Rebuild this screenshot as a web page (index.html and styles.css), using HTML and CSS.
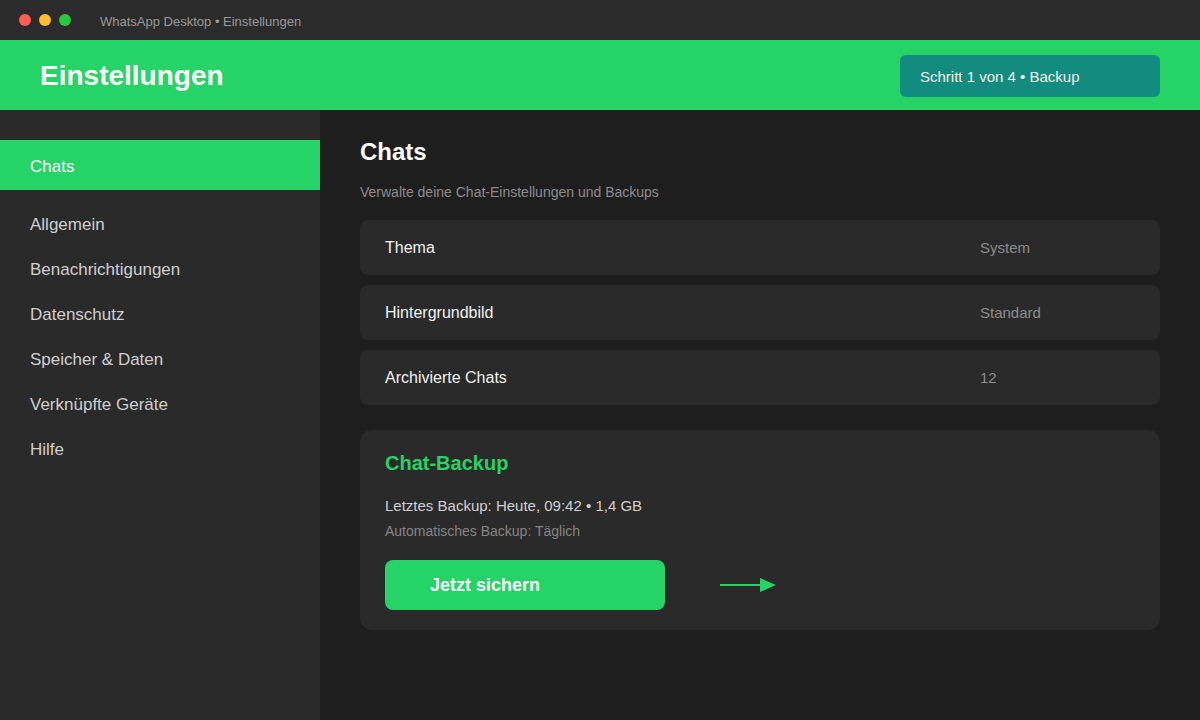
FILE: index.html
```html
<!DOCTYPE html>
<html lang="de">
<head>
  <meta charset="UTF-8">
  <meta name="viewport" content="width=device-width, initial-scale=1.0">
  <title>WhatsApp Desktop • Einstellungen</title>
  <link rel="stylesheet" href="styles.css">
</head>
<body>
  <div class="window">
    <div class="titlebar">
      <div class="lights">
        <span class="light red"></span>
        <span class="light yellow"></span>
        <span class="light green"></span>
      </div>
      <span class="window-title">WhatsApp Desktop • Einstellungen</span>
    </div>

    <header class="header">
      <h1>Einstellungen</h1>
      <div class="step">Schritt 1 von 4 • Backup</div>
    </header>

    <div class="body">
      <nav class="sidebar">
        <a class="nav-item active">Chats</a>
        <div class="nav-list">
          <a class="nav-item">Allgemein</a>
          <a class="nav-item">Benachrichtigungen</a>
          <a class="nav-item">Datenschutz</a>
          <a class="nav-item">Speicher &amp; Daten</a>
          <a class="nav-item">Verknüpfte Geräte</a>
          <a class="nav-item">Hilfe</a>
        </div>
      </nav>

      <main class="content">
        <h2>Chats</h2>
        <p class="subtitle">Verwalte deine Chat-Einstellungen und Backups</p>

        <div class="settings">
          <div class="setting-row">
            <span class="setting-label">Thema</span>
            <span class="setting-value">System</span>
          </div>
          <div class="setting-row">
            <span class="setting-label">Hintergrundbild</span>
            <span class="setting-value">Standard</span>
          </div>
          <div class="setting-row">
            <span class="setting-label">Archivierte Chats</span>
            <span class="setting-value">12</span>
          </div>
        </div>

        <section class="backup">
          <h3>Chat-Backup</h3>
          <p class="backup-last">Letztes Backup: Heute, 09:42 • 1,4 GB</p>
          <p class="backup-auto">Automatisches Backup: Täglich</p>
          <div class="backup-actions">
            <button class="backup-btn">Jetzt sichern</button>
            <svg class="arrow" width="56" height="16" viewBox="0 0 56 16">
              <line x1="0" y1="8" x2="42" y2="8" stroke="#25d366" stroke-width="2"/>
              <polygon points="40,1 56,8 40,15" fill="#25d366"/>
            </svg>
          </div>
        </section>
      </main>
    </div>
  </div>
</body>
</html>
```

FILE: styles.css
```css
body {
    margin: 0;
    font-family: "Liberation Sans", Arial, sans-serif;
    background-color: #1e1e1e;
}

.window {
    width: 1200px;
    height: 720px;
    display: flex;
    flex-direction: column;
    overflow: hidden;
}

/* barra da janela */
.titlebar {
    height: 40px;
    flex-shrink: 0;
    background-color: #2b2b2b;
    display: flex;
    align-items: center;
    padding-left: 19px;
}

.lights {
    display: flex;
    gap: 8px;
}

.light {
    width: 12px;
    height: 12px;
    border-radius: 50%;
}

.light.red { background-color: #ff5f57; }
.light.yellow { background-color: #febc2e; }
.light.green { background-color: #28c840; }

.window-title {
    margin-left: 29px;
    padding-top: 2px;
    font-size: 13px;
    color: #9a9a9a;
}

.header {
    height: 70px;
    flex-shrink: 0;
    box-sizing: border-box;
    padding: 2px 40px 0;
    background-color: #25d366;
    display: flex;
    align-items: center;
    justify-content: space-between;
}

.header h1 {
    margin: 0;
    font-size: 28px;
    font-weight: bold;
    color: #fff;
}

.step {
    width: 260px;
    height: 42px;
    box-sizing: border-box;
    padding-left: 20px;
    display: flex;
    align-items: center;
    background-color: #128c7e;
    border-radius: 6px;
    color: #f2f2f2;
    font-size: 15px;
}

.body {
    flex: 1;
    display: flex;
}

.sidebar {
    width: 320px;
    flex-shrink: 0;
    background-color: #2a2a2a;
    padding-top: 30px;
}

.nav-item {
    display: flex;
    align-items: center;
    height: 45px;
    padding-left: 30px;
    font-size: 17px;
    color: #cfcfcf;
}

.nav-item.active {
    height: 50px;
    box-sizing: border-box;
    padding-top: 3px;
    background-color: #25d366;
    color: #fff;
}

.nav-list {
    padding-top: 12px;
}

.content {
    flex: 1;
    padding: 20px 40px;
}

.content h2 {
    margin: 0;
    font-size: 24px;
    line-height: 44px;
    font-weight: bold;
    color: #fff;
}

.subtitle {
    margin: 8px 0 0;
    font-size: 14px;
    line-height: 20px;
    color: #8c8c8c;
}

.settings {
    margin-top: 18px;
    display: flex;
    flex-direction: column;
    gap: 10px;
}

.setting-row {
    height: 55px;
    display: flex;
    align-items: center;
    padding-left: 25px;
    background-color: #2a2a2a;
    border-radius: 8px;
}

.setting-label {
    flex: 1;
    font-size: 16px;
    color: #f2f2f2;
}

.setting-value {
    width: 180px;
    font-size: 15px;
    color: #8c8c8c;
}

.backup {
    margin-top: 25px;
    height: 200px;
    box-sizing: border-box;
    padding: 20px 25px;
    background-color: #2a2a2a;
    border-radius: 12px;
}

.backup h3 {
    margin: 0;
    font-size: 20px;
    line-height: 26px;
    color: #25d366;
}

.backup-last {
    margin: 20px 0 0;
    font-size: 15px;
    line-height: 20px;
    color: #d0d0d0;
}

.backup-auto {
    margin: 6px 0 0;
    font-size: 14px;
    line-height: 18px;
    color: #858585;
}

.backup-actions {
    margin-top: 20px;
    display: flex;
    align-items: center;
}

.backup-btn {
    width: 280px;
    height: 50px;
    border: none;
    border-radius: 8px;
    background-color: #25d366;
    color: #fff;
    font-family: inherit;
    font-size: 18px;
    font-weight: bold;
    text-align: left;
    padding-left: 45px;
}

.arrow {
    margin-left: 55px;
}
```
